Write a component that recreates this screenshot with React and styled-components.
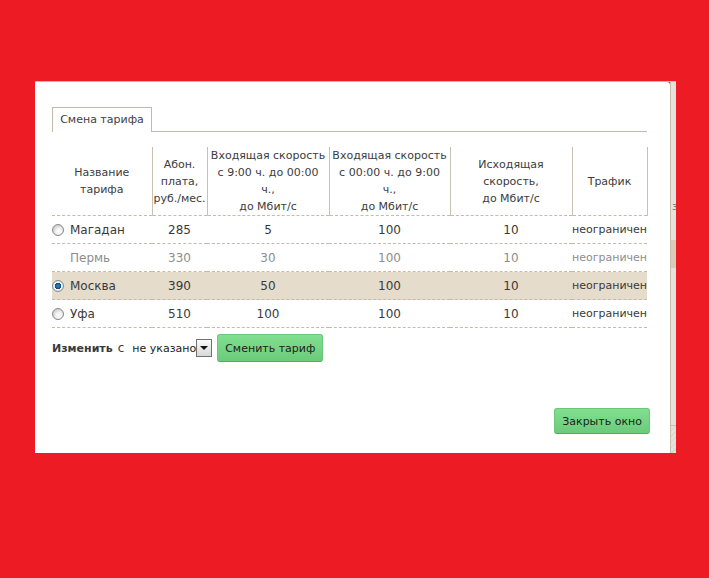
import styled, { createGlobalStyle } from "styled-components";

const GlobalStyle = createGlobalStyle`
  html, body {
    margin: 0;
    padding: 0;
    background: #ed1c24;
  }
  body {
    font-family: "DejaVu Sans", Verdana, sans-serif;
    font-size: 11px;
    color: #3a3a3a;
  }
`;

const tariffs = [
  { name: "Магадан", fee: 285, day: 5, night: 100, out: 10, traffic: "неограничен", radio: true },
  { name: "Пермь", fee: 330, day: 30, night: 100, out: 10, traffic: "неограничен", disabled: true },
  { name: "Москва", fee: 390, day: 50, night: 100, out: 10, traffic: "неограничен", radio: true, current: true },
  { name: "Уфа", fee: 510, day: 100, night: 100, out: 10, traffic: "неограничен", radio: true },
];

const App = () => {
  return (
    <Page>
      <GlobalStyle />
      <Frame>
        <Modal>
          <Tabs>
            <Tab>Смена тарифа</Tab>
          </Tabs>
          <Table>
            <colgroup>
              <col style={{ width: 100 }} />
              <col style={{ width: 55 }} />
              <col style={{ width: 122 }} />
              <col style={{ width: 121 }} />
              <col style={{ width: 122 }} />
              <col style={{ width: 75 }} />
            </colgroup>
            <thead>
              <tr>
                <Th>Название<br />тарифа</Th>
                <Th>Абон.<br />плата,<br />руб./мес.</Th>
                <Th>Входящая скорость<br />с 9:00 ч. до 00:00<br />ч.,<br />до Мбит/с</Th>
                <Th>Входящая скорость<br />с 00:00 ч. до 9:00<br />ч.,<br />до Мбит/с</Th>
                <Th>Исходящая<br />скорость,<br />до Мбит/с</Th>
                <Th>Трафик</Th>
              </tr>
            </thead>
            <tbody>
              {tariffs.map((t) => (
                <Row key={t.name} $current={t.current} $disabled={t.disabled}>
                  <NameCell>
                    <NameWrap>
                      {t.radio ? <Radio $checked={t.current} /> : <RadioGap />}
                      {t.name}
                    </NameWrap>
                  </NameCell>
                  <Td>{t.fee}</Td>
                  <Td>{t.day}</Td>
                  <Td>{t.night}</Td>
                  <Td>{t.out}</Td>
                  <Td>{t.traffic}</Td>
                </Row>
              ))}
            </tbody>
          </Table>
          <Controls>
            <Label>Изменить</Label>
            <Since>с</Since>
            <Select>
              <SelectText>не указано</SelectText>
              <SelectArrow />
            </Select>
            <GreenButton>Сменить тариф</GreenButton>
          </Controls>
          <Footer>
            <GreenButton $small>Закрыть окно</GreenButton>
          </Footer>
        </Modal>
        <Behind>
          <BehindGap $h={118} />
          <BehindGlyph>з</BehindGlyph>
          <BehindGap $h={26} />
          <BehindBand />
          <BehindGap $h={157} />
          <BehindHatch />
        </Behind>
      </Frame>
    </Page>
  );
};

const Page = styled.div`
  padding: 81px 0 0 35px;
  height: 578px;
  box-sizing: border-box;
`;

const Frame = styled.div`
  display: flex;
  width: 641px;
  height: 372px;
  border-top: 1px solid #c9bea9;
  box-sizing: border-box;
`;

const Modal = styled.div`
  width: 635px;
  background: #fff;
  border-top-right-radius: 3px;
  padding: 25px 20px 19px 17px;
  box-sizing: border-box;
  display: flex;
  flex-direction: column;
`;

const Tabs = styled.div`
  display: flex;
  width: 595px;
  border-bottom: 1px solid #c2b9a8;
`;

const Tab = styled.div`
  height: 23px;
  width: 98px;
  border: 1px solid #c2b9a8;
  border-bottom: none;
  background: #fff;
  margin-bottom: -1px;
  padding-bottom: 1px;
  box-sizing: content-box;
  display: flex;
  align-items: center;
  justify-content: center;
  color: #404040;
`;

const Table = styled.table`
  width: 595px;
  table-layout: fixed;
  border-collapse: collapse;
  margin-top: 15px;
`;

const Th = styled.th`
  height: 68px;
  padding: 0;
  font-weight: normal;
  text-align: center;
  vertical-align: middle;
  line-height: 17px;
  color: #3c3c3c;
  white-space: nowrap;
  border-right: 1px solid #c9c0b0;
  border-bottom: 1px dashed #c5bba9;
`;

const Row = styled.tr`
  background: ${({ $current }) => ($current ? "#e5dccb" : "transparent")};
  color: ${({ $disabled }) => ($disabled ? "#8d8d8d" : "#3a3a3a")};
  font-size: 12px;
`;

const Td = styled.td`
  height: 27px;
  padding: 0;
  text-align: center;
  vertical-align: middle;
  white-space: nowrap;
  border-bottom: 1px dashed #c5bba9;

  &:last-child {
    font-size: 11px;
    text-align: right;
  }
`;

const NameCell = styled(Td)`
  text-align: left;
`;

const NameWrap = styled.div`
  display: flex;
  align-items: center;
  gap: 6px;
`;

const Radio = styled.span`
  width: 10px;
  height: 10px;
  border-radius: 50%;
  border: 1px solid #8a8a8a;
  background: ${({ $checked }) =>
    $checked
      ? "radial-gradient(circle, #2f8fd0 0, #0d4f85 3px, #f4f4f4 3.5px, #d9d9d9 6px)"
      : "radial-gradient(circle at 60% 65%, #ffffff 0, #f2f2f2 3px, #d2d2d2 6px)"};
  flex: none;
`;

const RadioGap = styled.span`
  width: 12px;
  flex: none;
`;

const Controls = styled.div`
  display: flex;
  align-items: center;
  margin-top: 6px;
  height: 28px;
`;

const Label = styled.span`
  font-weight: bold;
  color: #3a3a3a;
`;

const Since = styled.span`
  margin-left: 5px;
  margin-right: 8px;
  font-size: 12px;
`;

const Select = styled.div`
  display: flex;
  align-items: center;
`;

const SelectText = styled.span`
  color: #222;
`;

const SelectArrow = styled.span`
  width: 14px;
  height: 16px;
  border: 1px solid #707070;
  background: linear-gradient(#fafafa, #d8d8d8);
  display: flex;
  align-items: center;
  justify-content: center;

  &::after {
    content: "";
    border-left: 4px solid transparent;
    border-right: 4px solid transparent;
    border-top: 4px solid #111;
  }
`;

const GreenButton = styled.button`
  margin-left: ${({ $small }) => ($small ? "0" : "5px")};
  height: ${({ $small }) => ($small ? "26px" : "28px")};
  padding: 0 7px;
  border: 1px solid #6bc679;
  border-bottom-color: #4fae5e;
  border-radius: 3px;
  background: linear-gradient(#80e08f, #6ccb7b);
  font-family: "DejaVu Sans", Verdana, sans-serif;
  font-size: 11px;
  color: #1d1d1d;
  cursor: pointer;
`;

const Footer = styled.div`
  margin-top: auto;
  display: flex;
  justify-content: flex-end;
`;

const Behind = styled.div`
  width: 6px;
  background: #e5e2dd;
  border-left: 1px solid #c9bea9;
  box-sizing: border-box;
  display: flex;
  flex-direction: column;
  overflow: hidden;
`;

const BehindGap = styled.div`
  height: ${({ $h }) => $h}px;
  flex: none;
`;

const BehindGlyph = styled.div`
  height: 14px;
  font-size: 11px;
  line-height: 14px;
  color: #777;
  margin-left: 1px;
`;

const BehindBand = styled.div`
  height: 28px;
  background: #d8ccb8;
  flex: none;
`;

const BehindHatch = styled.div`
  flex: 1;
  border-top: 1px solid #c9bea9;
  background: repeating-linear-gradient(135deg, #e5e2dd 0 3px, #d9d5cf 3px 4px);
`;

export default App;
